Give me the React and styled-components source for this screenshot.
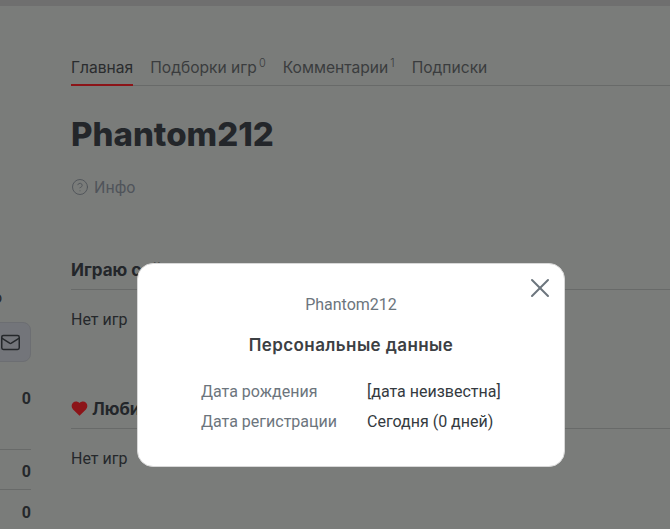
import React from "react";
import styled, { createGlobalStyle } from "styled-components";
import { Mail, CircleHelp, X } from "lucide-react";

const Global = createGlobalStyle`
  html, body {
    margin: 0;
    padding: 0;
    height: 100%;
    overflow: hidden;
    background: #7a7c7a;
    font-family: "Roboto", "Liberation Sans", sans-serif;
  }
`;

const TopBar = styled.div`
  height: 6px;
  background: #6f6f6f;
`;

const Page = styled.div`
  display: flex;
  gap: 40px;
  height: 523px;
  overflow: hidden;
`;

const Sidebar = styled.aside`
  flex: 0 0 31px;
  min-width: 0;
  padding-top: 282px;
  display: flex;
  flex-direction: column;
  align-items: flex-end;
  color: #25282b;
`;

const ClippedLabel = styled.div`
  height: 20px;
  width: 31px;
  margin-bottom: 15px;
  font-size: 16px;
  line-height: 20px;
  overflow: hidden;
  white-space: nowrap;
  text-indent: -7px;
`;

const IconButton = styled.div`
  flex: none;
  width: 60px;
  height: 40px;
  box-sizing: border-box;
  display: flex;
  align-items: center;
  justify-content: flex-end;
  padding-right: 9px;
  background: #73757a;
  border: 1px solid #6c6e72;
  border-radius: 8px;
  color: #25282b;
`;

const Stat = styled.div`
  width: 100%;
  box-sizing: border-box;
  height: ${(p) => p.$h}px;
  padding-top: ${(p) => p.$top}px;
  text-align: right;
  font-size: 16px;
  font-weight: 700;
  line-height: 18px;
  border-top: ${(p) => (p.$line ? "1px solid #686a69" : "none")};
`;

const Main = styled.main`
  flex: 1;
  min-width: 0;
`;

const Tabs = styled.nav`
  display: flex;
  gap: 17px;
  height: 80px;
  align-items: flex-end;
  box-sizing: border-box;
  border-bottom: 1px solid #686a69;
`;

const Tab = styled.div`
  font-family: "Inter", "Liberation Sans", sans-serif;
  font-size: 15.6px;
  line-height: 20px;
  height: 32px;
  padding-top: 4px;
  box-sizing: border-box;
  margin-bottom: -1px;
  white-space: nowrap;
  color: ${(p) => (p.$active ? "#2a2c2e" : "#3a3c3e")};
  border-bottom: 2px solid ${(p) => (p.$active ? "#8c1418" : "transparent")};
  sup {
    font-size: 11px;
    line-height: 0;
    margin-left: 2px;
    font-weight: 300;
  }
`;

const Name = styled.h1`
  margin: 28px 0 0;
  font-family: "Inter", "Liberation Sans", sans-serif;
  font-size: 33px;
  line-height: 40px;
  font-weight: 800;
  color: #23262a;
`;

const Info = styled.div`
  display: flex;
  align-items: center;
  gap: 5px;
  margin-top: 21px;
  height: 24px;
  font-size: 16px;
  color: #50545a;
`;

const Section = styled.section`
  margin-top: ${(p) => p.$top}px;
`;

const SectionTitle = styled.h2`
  margin: 0;
  display: flex;
  align-items: center;
  gap: 4px;
  height: 31px;
  padding-bottom: 9px;
  box-sizing: border-box;
  font-family: "Inter", "Liberation Sans", sans-serif;
  font-size: 17px;
  font-weight: 700;
  color: #23262a;
  border-bottom: 1px solid #686a69;
`;

const Empty = styled.p`
  margin: 20px 0 0;
  font-size: 16px;
  line-height: 20px;
  color: #25282b;
`;

const Modal = styled.div`
  position: fixed;
  left: 137px;
  top: 263px;
  width: 428px;
  height: 204px;
  box-sizing: border-box;
  padding-top: 31px;
  background: #fff;
  border-radius: 16px;
  border: 1px solid #d8d8d8;
  text-align: center;
`;

const CloseButton = styled.div`
  position: absolute;
  right: 8px;
  top: 8px;
  color: #6c757d;
  display: flex;
`;

const ModalUser = styled.div`
  font-size: 16px;
  line-height: 20px;
  color: #6c757d;
`;

const ModalTitle = styled.div`
  margin-top: 20px;
  font-family: "Inter", "Liberation Sans", sans-serif;
  font-size: 17px;
  line-height: 20px;
  font-weight: 600;
  letter-spacing: 0.4px;
  color: #3c4043;
`;

const Details = styled.dl`
  margin: 27px 0 0 63px;
  display: grid;
  grid-template-columns: 166px 1fr;
  row-gap: 10px;
  text-align: left;
  font-size: 16px;
  line-height: 20px;
  dt {
    color: #6c757d;
  }
  dd {
    margin: 0;
    color: #343a40;
  }
`;

const Heart = () => (
  <svg width="17" height="15" viewBox="0 0 24 22" fill="#8c1418">
    <path d="M12 21.5 2.6 12.3C-.2 9.5-.2 5.2 2.4 2.6 5 0 9.2.1 12 3c2.8-2.9 7-3 9.6-.4 2.6 2.6 2.6 6.9-.2 9.7L12 21.5z" />
  </svg>
);

export default function App() {
  return (
    <>
      <Global />
      <TopBar />
      <Page>
        <Sidebar>
          <ClippedLabel>о</ClippedLabel>
          <IconButton>
            <Mail size={21} strokeWidth={1.7} />
          </IconButton>
          <Stat $h={88} $top={28}>0</Stat>
          <Stat $h={41} $top={13} $line>0</Stat>
          <Stat $h={41} $top={14} $line>0</Stat>
        </Sidebar>
        <Main>
          <Tabs>
            <Tab $active>Главная</Tab>
            <Tab>Подборки игр<sup>0</sup></Tab>
            <Tab>Комментарии<sup>1</sup></Tab>
            <Tab>Подписки</Tab>
          </Tabs>
          <Name>Phantom212</Name>
          <Info>
            <CircleHelp size={18} strokeWidth={1.25} />
            Инфо
          </Info>
          <Section $top={60}>
            <SectionTitle>Играю сейчас</SectionTitle>
            <Empty>Нет игр</Empty>
          </Section>
          <Section $top={68}>
            <SectionTitle>
              <Heart />
              Любимые игры
            </SectionTitle>
            <Empty>Нет игр</Empty>
          </Section>
        </Main>
      </Page>
      <Modal>
        <CloseButton>
          <X size={32} strokeWidth={1.5} />
        </CloseButton>
        <ModalUser>Phantom212</ModalUser>
        <ModalTitle>Персональные данные</ModalTitle>
        <Details>
          <dt>Дата рождения</dt>
          <dd>[дата неизвестна]</dd>
          <dt>Дата регистрации</dt>
          <dd>Сегодня (0 дней)</dd>
        </Details>
      </Modal>
    </>
  );
}
